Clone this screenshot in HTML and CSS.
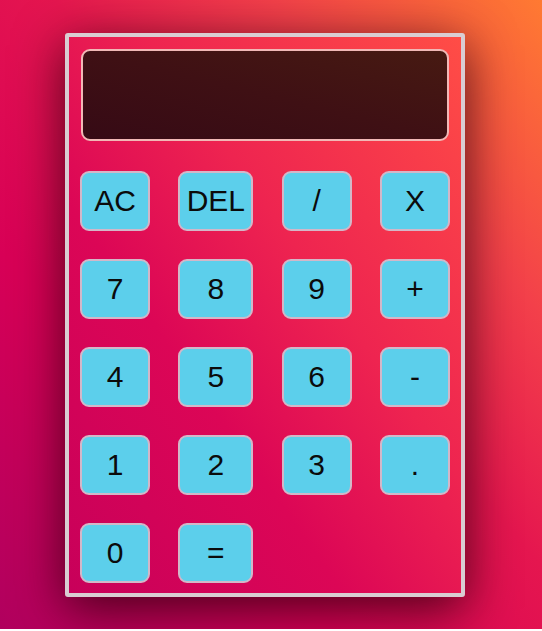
FILE: index.html
```html
<!DOCTYPE html>
<html>
<head>
<meta charset="utf-8">
<link rel="stylesheet" href="styles.css">
</head>
<body>
<div class="calc">
  <div class="display"></div>
  <div class="keys">
    <button class="key">AC</button>
    <button class="key">DEL</button>
    <button class="key">/</button>
    <button class="key">X</button>
    <button class="key">7</button>
    <button class="key">8</button>
    <button class="key">9</button>
    <button class="key">+</button>
    <button class="key">4</button>
    <button class="key">5</button>
    <button class="key">6</button>
    <button class="key">-</button>
    <button class="key">1</button>
    <button class="key">2</button>
    <button class="key">3</button>
    <button class="key">.</button>
    <button class="key">0</button>
    <button class="key">=</button>
  </div>
</div>
</body>
</html>
```
FILE: styles.css
```css
html { margin: 0; padding: 0; background: #fff; }
body {
  margin: 0;
  height: 629px;
  background: linear-gradient(to top right, #b0005e 0%, #d80056 30%, #e5164f 55%, #f3404a 75%, #ff7a32 100%);
  font-family: "Liberation Sans", Arial, sans-serif;
  overflow: hidden;
}
.calc {
  box-sizing: border-box;
  width: 400px;
  height: 564px;
  margin: 0 0 0 65px;
  position: relative;
  top: 33px;
  border: 4px solid #d9cdd2;
  border-radius: 3px;
  background: linear-gradient(to top right, #c8005a 0%, #dc0656 35%, #ee2450 60%, #ff4d46 100%);
  box-shadow: 0 12px 50px rgba(40, 0, 10, 0.8);
  padding: 12px 11px 10px 11px;
  display: flex;
  flex-direction: column;
  gap: 30px;
}
.display {
  box-sizing: border-box;
  height: 92px;
  margin: 0 1px;
  border: 2px solid #f1b8b6;
  border-radius: 9px;
  background: linear-gradient(to top right, #360a15, #3f1014 50%, #471a12);
}
.keys {
  display: grid;
  grid-template-columns: 70px 75px 70px 70px;
  grid-auto-rows: 60px;
  row-gap: 28px;
  justify-content: space-between;
}
.key {
  box-sizing: border-box;
  margin: 0;
  padding: 0;
  border: 2px solid #d3b7c8;
  border-radius: 9px;
  background: #5ccfeb;
  color: #0b0b0b;
  font-family: "Liberation Sans", Arial, sans-serif;
  font-size: 30px;
}
```
